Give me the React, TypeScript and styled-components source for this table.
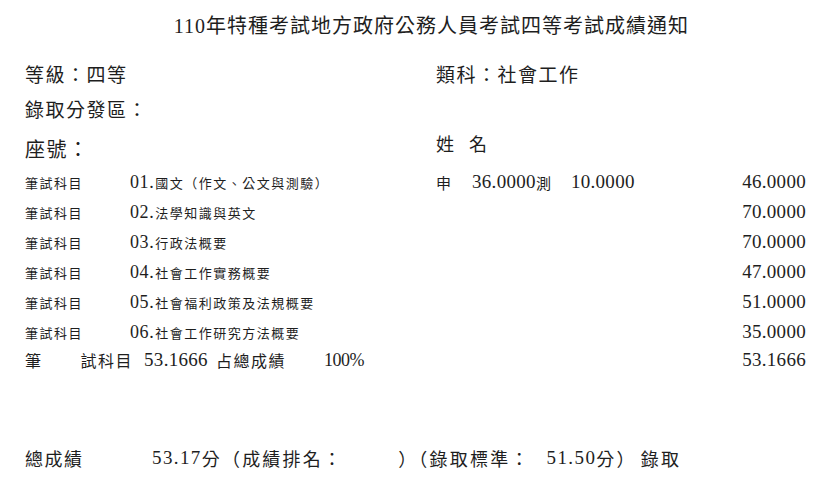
import React from "react";
import styled, { createGlobalStyle } from "styled-components";

const GlobalStyle = createGlobalStyle`
  html, body { margin: 0; padding: 0; background: #ffffff; }
  body {
    font-family: "Liberation Serif", "Noto Sans CJK TC", serif;
    color: #1e1e1e;
  }
`;

const Page = styled.div`
  width: 828px;
  height: 492px;
  box-sizing: border-box;
  padding: 12px 22px 0 25px;
  overflow: hidden;
`;

const Title = styled.h1`
  margin: 0;
  padding-left: 32px;
  font-weight: 400;
  font-size: 20px;
  line-height: 28px;
  letter-spacing: 1px;
  text-align: center;
  white-space: nowrap;
`;

const InfoRow = styled.div<{ $top: number }>`
  display: grid;
  grid-template-columns: 411px 1fr;
  align-items: start;
  margin-top: ${(p) => p.$top}px;
`;

const InfoText = styled.div<{ $size?: number; $lh?: number }>`
  font-size: ${(p) => p.$size ?? 19}px;
  line-height: ${(p) => p.$lh ?? 28}px;
  letter-spacing: 1.5px;
  white-space: nowrap;
`;

const NameLabel = styled.div`
  display: flex;
  gap: 15px;
  font-size: 18px;
  line-height: 18px;
`;

const SubjectList = styled.div`
  margin-top: 3px;
  display: flex;
  flex-direction: column;
`;

const SubjectRow = styled.div`
  display: grid;
  grid-template-columns: 105px 306px 1fr auto;
  align-items: center;
  height: 30px;
  white-space: nowrap;
`;

const RowLabel = styled.span`
  font-size: 13px;
  letter-spacing: 1.5px;
`;

const SubjectName = styled.span`
  font-size: 13px;
  letter-spacing: 1.5px;
  display: flex;
  align-items: center;
`;

const SubjectNo = styled.span`
  font-size: 18px;
  letter-spacing: 0.6px;
  margin-right: 1px;
`;

const Mid = styled.span`
  display: flex;
  align-items: center;
  font-size: 15px;
`;

const Num = styled.span<{ $gap?: number }>`
  font-size: 19px;
  letter-spacing: 0.3px;
  margin-left: ${(p) => p.$gap ?? 0}px;
`;

const Percent = styled.span<{ $gap?: number }>`
  font-size: 18px;
  letter-spacing: -0.5px;
  margin-left: ${(p) => p.$gap ?? 0}px;
`;

const SmallCjk = styled.span<{ $gap?: number }>`
  font-size: 15px;
  margin-left: ${(p) => p.$gap ?? 0}px;
`;

const Score = styled.span`
  font-size: 19px;
  letter-spacing: 0.3px;
  text-align: right;
`;

const SummaryRow = styled.div`
  display: grid;
  grid-template-columns: 1fr auto;
  align-items: center;
  height: 26px;
  white-space: nowrap;
`;

const SummaryLeft = styled.div`
  display: flex;
  align-items: center;
`;

const SumCjk = styled.span<{ $gap?: number }>`
  font-size: 16px;
  letter-spacing: 1.5px;
  margin-left: ${(p) => p.$gap ?? 0}px;
`;

const TotalRow = styled.div`
  display: grid;
  grid-template-columns: 127px 1fr;
  align-items: center;
  margin-top: 71px;
  height: 28px;
  white-space: nowrap;
  font-size: 18px;
  letter-spacing: 2.2px;
`;

const TotalLabel = styled.span`
  letter-spacing: 1.5px;
`;

const TotalLine = styled.div`
  display: flex;
  align-items: center;
`;

const TotalNum = styled.span<{ $gap?: number }>`
  font-size: 19px;
  letter-spacing: 1.4px;
  margin-left: ${(p) => p.$gap ?? 0}px;
`;

const Tail = styled.span`
  margin-left: 4px;
`;

const Blank = styled.span`
  display: inline-block;
  width: 55px;
`;

type Subject = { no: string; name: string; score: string; detail?: boolean };

const subjects: Subject[] = [
  { no: "01.", name: "國文（作文、公文與測驗）", score: "46.0000", detail: true },
  { no: "02.", name: "法學知識與英文", score: "70.0000" },
  { no: "03.", name: "行政法概要", score: "70.0000" },
  { no: "04.", name: "社會工作實務概要", score: "47.0000" },
  { no: "05.", name: "社會福利政策及法規概要", score: "51.0000" },
  { no: "06.", name: "社會工作研究方法概要", score: "35.0000" },
];

export default function App() {
  return (
    <>
      <GlobalStyle />
      <Page>
        <Title>110年特種考試地方政府公務人員考試四等考試成績通知</Title>

        <InfoRow $top={22}>
          <InfoText>等級：四等</InfoText>
          <InfoText>類科：社會工作</InfoText>
        </InfoRow>

        <InfoRow $top={7}>
          <InfoText>錄取分發區：</InfoText>
        </InfoRow>

        <InfoRow $top={11}>
          <InfoText $size={20}>座號：</InfoText>
          <NameLabel>
            <span>姓</span>
            <span>名</span>
          </NameLabel>
        </InfoRow>

        <SubjectList>
          {subjects.map((s) => (
            <SubjectRow key={s.no}>
              <RowLabel>筆試科目</RowLabel>
              <SubjectName>
                <SubjectNo>{s.no}</SubjectNo>
                {s.name}
              </SubjectName>
              {s.detail ? (
                <Mid>
                  <SmallCjk>申</SmallCjk>
                  <Num $gap={21}>36.0000</Num>
                  <SmallCjk>測</SmallCjk>
                  <Num $gap={20}>10.0000</Num>
                </Mid>
              ) : (
                <span />
              )}
              <Score>{s.score}</Score>
            </SubjectRow>
          ))}
          <SummaryRow>
            <SummaryLeft>
              <SumCjk>筆</SumCjk>
              <SumCjk $gap={38}>試科目</SumCjk>
              <Num $gap={11}>53.1666</Num>
              <SumCjk $gap={8}>占總成績</SumCjk>
              <Percent $gap={38}>100%</Percent>
            </SummaryLeft>
            <Score>53.1666</Score>
          </SummaryRow>
        </SubjectList>

        <TotalRow>
          <TotalLabel>總成績</TotalLabel>
          <TotalLine>
            <TotalNum>53.17</TotalNum>
            <span>分（成績排名：</span>
            <Blank />
            <span>）（錄取標準：</span>
            <TotalNum $gap={16}>51.50</TotalNum>
            <span>分）</span>
            <Tail>錄取</Tail>
          </TotalLine>
        </TotalRow>
      </Page>
    </>
  );
}
